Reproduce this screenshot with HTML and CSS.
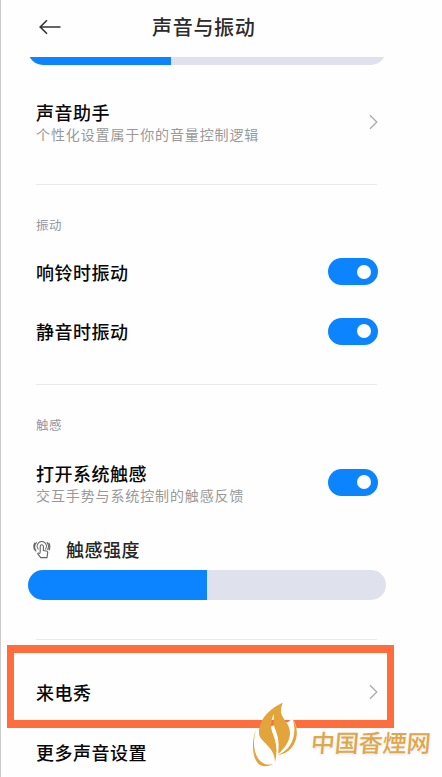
FILE: index.html
```html
<!DOCTYPE html>
<html lang="zh-CN">
<head>
<meta charset="utf-8">
<title>声音与振动</title>
<link rel="stylesheet" href="styles.css">
</head>
<body>
<main class="screen">
  <header class="header">
    <svg class="back" viewBox="0 0 22 16" width="22" height="16"><path d="M21.5 8H1.2M8 1.2 1.2 8 8 14.8"/></svg>
    <h1>声音与振动</h1>
  </header>
  <div class="volume"><div class="track"><div class="fill short"></div></div></div>
  <section class="group assistant">
    <div class="row tall">
      <div class="copy"><div class="label strong">声音助手</div><div class="hint">个性化设置属于你的音量控制逻辑</div></div>
      <svg class="chevron" viewBox="0 0 9 16" width="9" height="16"><path d="M1 1.3 7.8 8 1 14.7"/></svg>
    </div>
  </section>
  <section class="group vibration">
    <h2>振动</h2>
    <div class="row"><div class="label">响铃时振动</div><div class="switch"></div></div>
    <div class="row"><div class="label">静音时振动</div><div class="switch"></div></div>
  </section>
  <section class="group touch">
    <h2>触感</h2>
    <div class="row haptic">
      <div class="copy"><div class="label strong">打开系统触感</div><div class="hint">交互手势与系统控制的触感反馈</div></div>
      <div class="switch"></div>
    </div>
    <div class="strength">
      <svg viewBox="0 0 18 19" width="18" height="19"><path d="M7.2 12.8V6.4a1.6 1.6 0 0 1 3.2 0v4.1l3.1.5q1.4.3 1.2 1.7l-.7 4.9H7.8L4.7 13.8q.4-1.5 2.5-.1M5.4 9.3a4.6 4.6 0 1 1 6.8 0M3.2 11.5a7 7 0 0 1 .5-9.4M13.9 2.1a7 7 0 0 1 .6 7.8M1.7 10.2a8.5 8.5 0 0 1 .1-7.5M15.8 2.7a8.5 8.5 0 0 1 .2 7.5"/></svg>
      <div class="label">触感强度</div>
    </div>
    <div class="track"><div class="fill long"></div></div>
  </section>
  <div class="row highlight">
    <div class="label">来电秀</div>
    <svg class="chevron" viewBox="0 0 9 16" width="9" height="16"><path d="M1 1.3 7.8 8 1 14.7"/></svg>
  </div>
  <div class="row more"><div class="label">更多声音设置</div></div>
  <div class="watermark">
    <svg viewBox="0 0 48 68" width="48" height="68">
      <path class="halo" d="M8 27 5 28C0 40 1 56 9 63c6 3 12 1 17-10 10 0 20-9 20-22 0-6-2-11-4.500-14.500L37 20Z"/>
      <path class="gold" d="M31.700.7C22 5 8 15 8 31c0 9 16 13 16 29 2-7 2-15 0-22-2-7-5-11-3.500-18 .3-3 1-6 2.500-8-.5 5-.8 9 .7 14 2.500 6 5 12 3.500 26C34 46 39 39 39 31c0-11-10-15-9-23 .2-3 1-5 1.700-7.300Z"/>
      <path class="gold" d="M5 28C0 40 1 58 9 63c5 2.500 10 1 13-1C7 66-1 48 5 28ZM41.500 16.500C47 33 40 48 27 53c15-1 25-20 14.500-36.500Z"/>
    </svg>
    <span>中国香煙网</span>
  </div>
</main>
</body>
</html>
```
FILE: styles.css
```css
* { box-sizing: border-box; }
body { margin: 0; background: #fefefe; font-family: "Noto Sans CJK SC", sans-serif; color: #080808; overflow: hidden; }
h1, h2 { margin: 0; }
.screen { position: relative; width: 442px; height: 777px; border-left: 1px solid #ccc; overflow: hidden; }
.header { height: 57px; display: flex; align-items: center; padding: 0 0 3px 38px; }
.back, .chevron, .strength svg { fill: none; stroke: #333; stroke-width: 1.6; }
h1 { margin-left: 91px; font-size: 20px; line-height: 30px; font-weight: 500; letter-spacing: .7px; color: #2b2b2b; }
.volume { height: 8px; display: flex; align-items: flex-end; overflow: hidden; padding-left: 27px; }
.track { width: 358px; height: 30px; flex-shrink: 0; border-radius: 15px; background: #dfe1ec; overflow: hidden; }
.fill { height: 100%; background: #0d84ff; }
.short { width: 143px; }
.long { width: 179px; }
.group::after { content: ""; display: block; width: 341px; height: 1px; margin-left: 35px; background: #e9e9e9; }
.row { height: 60px; display: flex; align-items: center; justify-content: space-between; padding: 0 64px 0 35px; }
.label { font-size: 18px; line-height: 24px; font-weight: 500; letter-spacing: .5px; }
.hint { font-size: 14px; line-height: 20px; font-weight: 400; letter-spacing: .88px; color: #999; }
.chevron { stroke: #aaa; stroke-width: 1.3; }
.switch { width: 50px; height: 27px; border-radius: 14px; background: #0d84ff; display: flex; align-items: center; justify-content: flex-end; padding-right: 7px; }
.switch::after { content: ""; width: 14px; height: 14px; border-radius: 50%; background: #fff; }
.assistant { height: 120px; padding-top: 27px; }
.assistant .row { height: 60px; }
.assistant::after { margin-top: 32px; }
.vibration { height: 200px; }
h2 { height: 57px; padding: 30px 0 0 35px; font-size: 12.5px; line-height: 20px; font-weight: 400; letter-spacing: .5px; color: #9396a5; }
.vibration .row { height: 59.5px; }
.vibration::after { margin-top: 23px; }
.touch { height: 254px; }
.haptic { height: 80px; }
.haptic .copy { padding-top: 1px; }
.strength { height: 48px; display: flex; align-items: center; padding: 6px 0 0 32px; gap: 15px; }
.strength svg { stroke: #666; stroke-width: 1.1; }
.strength .label { color: #252525; }
.touch .track { margin-left: 27px; }
.touch::after { margin-top: 39px; }
.highlight { width: 387px; height: 83px; margin: 6px 0 0 6px; border: 7px solid #ff6d3d; border-top-width: 8px; border-bottom-width: 8px; padding: 10px 9px 0 22px; }
.more { height: 47px; }
.watermark { position: absolute; left: 250px; top: 702px; display: flex; align-items: center; }
.gold { fill: #e2a43b; }
.halo { fill: #fff; }
.watermark span { margin: 12px 0 0 12px; font-size: 24px; line-height: 36px; color: #e0a64a; font-weight: 500; transform: skewX(-5deg); text-shadow: 0 0 3px #fff, 0 1px 3px #ddd; }
```
